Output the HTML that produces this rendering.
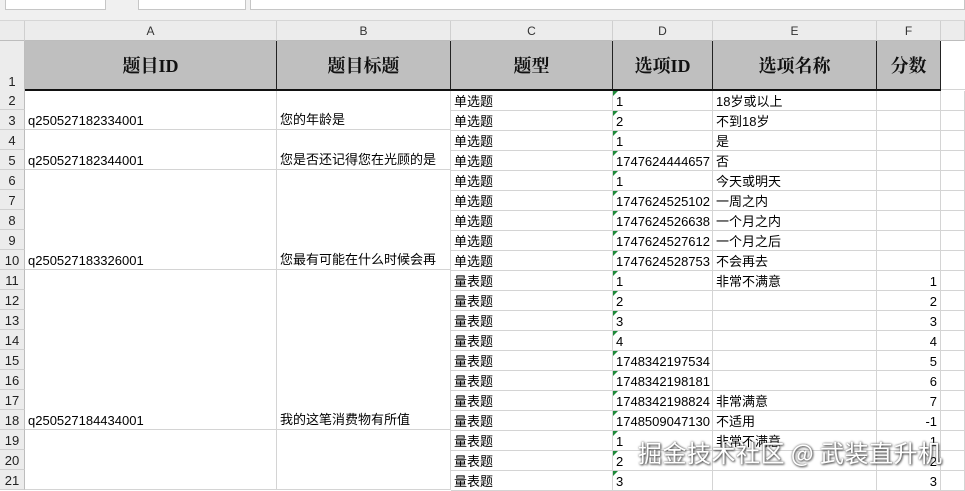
<!DOCTYPE html>
<html><head><meta charset="utf-8"><style>
*{margin:0;padding:0;box-sizing:border-box}
body{width:965px;height:484px;overflow:hidden;background:#fff;position:relative;font-family:"Liberation Sans","Noto Sans CJK SC",sans-serif;font-size:13px;color:#000}
.a{position:absolute}
.top{left:0;top:0;width:965px;height:21px;background:#f0f0f0;border-bottom:1px solid #d6d6d6}
.box{top:0;height:10px;background:#fff;border:1px solid #c6c6c6;border-top:none}
.ch{top:21px;height:20px;background:#ececec;border-right:1px solid #cfcfcf;border-bottom:1px solid #bdbdbd;text-align:center;line-height:20px;font-size:12px;color:#333}
.rh{left:0;width:25px;background:#ececec;border-bottom:1px solid #d0d0d0;border-right:1px solid #bdbdbd;font-size:13px;color:#222;text-align:center;display:flex;align-items:flex-end;justify-content:center;padding-bottom:1px}
.h{top:41px;height:50px;background:#bfbfbf;border-right:1px solid #222;border-bottom:2px solid #111;font-family:"Liberation Serif","Noto Serif CJK SC",serif;font-weight:bold;font-size:18px;display:flex;align-items:center;justify-content:center;color:#111}
.c{height:20px;border-right:1px solid #d4d4d4;border-bottom:1px solid #d4d4d4;line-height:21px;padding:0 3px;white-space:nowrap;overflow:hidden}
.m{border-right:1px solid #d4d4d4;border-bottom:1px solid #d4d4d4;white-space:nowrap;overflow:hidden;display:flex;align-items:flex-end;padding:0 3px 1px}
.g{position:relative}
.g::before{content:"";position:absolute;left:0;top:0;border-top:5px solid #1e8a3a;border-right:5px solid transparent}
.r{text-align:right}
.wm{left:638px;top:434px;font-size:24px;color:#fff;text-shadow:0 0 2px #555,1px 1px 2px #444;font-family:"Noto Sans CJK SC",sans-serif;letter-spacing:0.5px;white-space:nowrap}
</style></head><body>
<div class="a top"></div>
<div class="a box" style="left:5px;width:101px"></div>
<div class="a box" style="left:138px;width:108px"></div>
<div class="a box" style="left:250px;width:715px"></div>
<div class="a ch" style="left:0;width:25px;background:#ececec"></div>
<div class="a ch" style="left:25px;width:252px">A</div>
<div class="a ch" style="left:277px;width:174px">B</div>
<div class="a ch" style="left:451px;width:162px">C</div>
<div class="a ch" style="left:613px;width:100px">D</div>
<div class="a ch" style="left:713px;width:164px">E</div>
<div class="a ch" style="left:877px;width:64px">F</div>
<div class="a ch" style="left:941px;width:24px"></div>

<div class="a rh" style="top:41px;height:50px">1</div>
<div class="a h" style="left:25px;width:252px">题目ID</div>
<div class="a h" style="left:277px;width:174px">题目标题</div>
<div class="a h" style="left:451px;width:162px">题型</div>
<div class="a h" style="left:613px;width:100px">选项ID</div>
<div class="a h" style="left:713px;width:164px">选项名称</div>
<div class="a h" style="left:877px;width:64px">分数</div>
<div class="a" style="left:941px;top:41px;width:24px;height:49px;border-bottom:1px solid #d4d4d4"></div>

<div class="a rh" style="top:90px;height:20px">2</div>
<div class="a rh" style="top:110px;height:20px">3</div>
<div class="a rh" style="top:130px;height:20px">4</div>
<div class="a rh" style="top:150px;height:20px">5</div>
<div class="a rh" style="top:170px;height:20px">6</div>
<div class="a rh" style="top:190px;height:20px">7</div>
<div class="a rh" style="top:210px;height:20px">8</div>
<div class="a rh" style="top:230px;height:20px">9</div>
<div class="a rh" style="top:250px;height:20px">10</div>
<div class="a rh" style="top:270px;height:20px">11</div>
<div class="a rh" style="top:290px;height:20px">12</div>
<div class="a rh" style="top:310px;height:20px">13</div>
<div class="a rh" style="top:330px;height:20px">14</div>
<div class="a rh" style="top:350px;height:20px">15</div>
<div class="a rh" style="top:370px;height:20px">16</div>
<div class="a rh" style="top:390px;height:20px">17</div>
<div class="a rh" style="top:410px;height:20px">18</div>
<div class="a rh" style="top:430px;height:20px">19</div>
<div class="a rh" style="top:450px;height:20px">20</div>
<div class="a rh" style="top:470px;height:20px">21</div>

<div class="a m" style="left:25px;top:91px;width:252px;height:39px">q250527182334001</div>
<div class="a m" style="left:277px;top:91px;width:174px;height:39px">您的年龄是</div>
<div class="a m" style="left:25px;top:130px;width:252px;height:40px">q250527182344001</div>
<div class="a m" style="left:277px;top:130px;width:174px;height:40px">您是否还记得您在光顾的是</div>
<div class="a m" style="left:25px;top:170px;width:252px;height:100px">q250527183326001</div>
<div class="a m" style="left:277px;top:170px;width:174px;height:100px">您最有可能在什么时候会再</div>
<div class="a m" style="left:25px;top:270px;width:252px;height:160px">q250527184434001</div>
<div class="a m" style="left:277px;top:270px;width:174px;height:160px">我的这笔消费物有所值</div>
<div class="a m" style="left:25px;top:430px;width:252px;height:60px"></div>
<div class="a m" style="left:277px;top:430px;width:174px;height:60px"></div>

<div class="a" style="left:451px;top:91px;width:514px">
<div style="display:flex"><div class="c" style="width:162px">单选题</div><div class="c g" style="width:100px">1</div><div class="c" style="width:164px">18岁或以上</div><div class="c r" style="width:64px"></div><div class="c" style="width:24px"></div></div>
<div style="display:flex"><div class="c" style="width:162px">单选题</div><div class="c g" style="width:100px">2</div><div class="c" style="width:164px">不到18岁</div><div class="c r" style="width:64px"></div><div class="c" style="width:24px"></div></div>
<div style="display:flex"><div class="c" style="width:162px">单选题</div><div class="c g" style="width:100px">1</div><div class="c" style="width:164px">是</div><div class="c r" style="width:64px"></div><div class="c" style="width:24px"></div></div>
<div style="display:flex"><div class="c" style="width:162px">单选题</div><div class="c g" style="width:100px">1747624444657</div><div class="c" style="width:164px">否</div><div class="c r" style="width:64px"></div><div class="c" style="width:24px"></div></div>
<div style="display:flex"><div class="c" style="width:162px">单选题</div><div class="c g" style="width:100px">1</div><div class="c" style="width:164px">今天或明天</div><div class="c r" style="width:64px"></div><div class="c" style="width:24px"></div></div>
<div style="display:flex"><div class="c" style="width:162px">单选题</div><div class="c g" style="width:100px">1747624525102</div><div class="c" style="width:164px">一周之内</div><div class="c r" style="width:64px"></div><div class="c" style="width:24px"></div></div>
<div style="display:flex"><div class="c" style="width:162px">单选题</div><div class="c g" style="width:100px">1747624526638</div><div class="c" style="width:164px">一个月之内</div><div class="c r" style="width:64px"></div><div class="c" style="width:24px"></div></div>
<div style="display:flex"><div class="c" style="width:162px">单选题</div><div class="c g" style="width:100px">1747624527612</div><div class="c" style="width:164px">一个月之后</div><div class="c r" style="width:64px"></div><div class="c" style="width:24px"></div></div>
<div style="display:flex"><div class="c" style="width:162px">单选题</div><div class="c g" style="width:100px">1747624528753</div><div class="c" style="width:164px">不会再去</div><div class="c r" style="width:64px"></div><div class="c" style="width:24px"></div></div>
<div style="display:flex"><div class="c" style="width:162px">量表题</div><div class="c g" style="width:100px">1</div><div class="c" style="width:164px">非常不满意</div><div class="c r" style="width:64px">1</div><div class="c" style="width:24px"></div></div>
<div style="display:flex"><div class="c" style="width:162px">量表题</div><div class="c g" style="width:100px">2</div><div class="c" style="width:164px"></div><div class="c r" style="width:64px">2</div><div class="c" style="width:24px"></div></div>
<div style="display:flex"><div class="c" style="width:162px">量表题</div><div class="c g" style="width:100px">3</div><div class="c" style="width:164px"></div><div class="c r" style="width:64px">3</div><div class="c" style="width:24px"></div></div>
<div style="display:flex"><div class="c" style="width:162px">量表题</div><div class="c g" style="width:100px">4</div><div class="c" style="width:164px"></div><div class="c r" style="width:64px">4</div><div class="c" style="width:24px"></div></div>
<div style="display:flex"><div class="c" style="width:162px">量表题</div><div class="c g" style="width:100px">1748342197534</div><div class="c" style="width:164px"></div><div class="c r" style="width:64px">5</div><div class="c" style="width:24px"></div></div>
<div style="display:flex"><div class="c" style="width:162px">量表题</div><div class="c g" style="width:100px">1748342198181</div><div class="c" style="width:164px"></div><div class="c r" style="width:64px">6</div><div class="c" style="width:24px"></div></div>
<div style="display:flex"><div class="c" style="width:162px">量表题</div><div class="c g" style="width:100px">1748342198824</div><div class="c" style="width:164px">非常满意</div><div class="c r" style="width:64px">7</div><div class="c" style="width:24px"></div></div>
<div style="display:flex"><div class="c" style="width:162px">量表题</div><div class="c g" style="width:100px">1748509047130</div><div class="c" style="width:164px">不适用</div><div class="c r" style="width:64px">-1</div><div class="c" style="width:24px"></div></div>
<div style="display:flex"><div class="c" style="width:162px">量表题</div><div class="c g" style="width:100px">1</div><div class="c" style="width:164px">非常不满意</div><div class="c r" style="width:64px">1</div><div class="c" style="width:24px"></div></div>
<div style="display:flex"><div class="c" style="width:162px">量表题</div><div class="c g" style="width:100px">2</div><div class="c" style="width:164px"></div><div class="c r" style="width:64px">2</div><div class="c" style="width:24px"></div></div>
<div style="display:flex"><div class="c" style="width:162px">量表题</div><div class="c g" style="width:100px">3</div><div class="c" style="width:164px"></div><div class="c r" style="width:64px">3</div><div class="c" style="width:24px"></div></div>
</div>
<div class="a wm">掘金技术社区 @ 武装直升机</div>
</body></html>
